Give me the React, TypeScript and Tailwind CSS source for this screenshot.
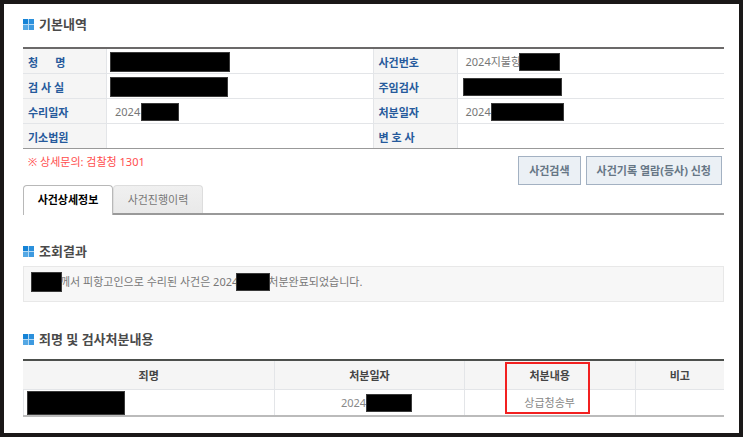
import type { ReactNode } from "react";
import clsx from "clsx";

const Mask = ({ className }: { className: string }) => (
  <span
    aria-hidden="true"
    className={clsx("relative block shrink-0 border border-[#3a3a3a] bg-black", className)}
  />
);

const SectionTitle = ({ children }: { children: ReactNode }) => (
  <h2 className="flex items-center gap-[5px] text-[13px] leading-4 font-bold text-[#4a4a4a]">
    <svg width="11" height="11" viewBox="0 0 11 11" aria-hidden="true">
      <rect width="11" height="11" fill="#b4d9f5" />
      <rect width="5" height="5" fill="#1583d6" />
      <rect x="6" width="5" height="5" fill="#2b90dc" />
      <rect y="6" width="5" height="5" fill="#55a8e4" />
      <rect x="6" y="6" width="5" height="5" fill="#3d9ae0" />
    </svg>
    {children}
  </h2>
);

const Label = ({ children }: { children: ReactNode }) => (
  <th
    scope="row"
    className="border-r border-[#e3e5e8] bg-[#f5f5f5] pt-1 pl-[5px] text-left font-bold whitespace-pre text-[#265a9c]"
  >
    {children}
  </th>
);

const Value = ({ children, className }: { children?: ReactNode; className?: string }) => (
  <td className={clsx("pt-px", className)}>
    <div className="flex items-center">{children}</div>
  </td>
);

const BasicInfo = () => (
  <table className="mt-[15px] w-full table-fixed border-separate border-spacing-0 border-t-2 border-b border-t-[#6b6969] border-b-[#999] [&_tr]:h-[25px] [&_tr:last-child]:h-6 [&_tr:not(:last-child)>*]:border-b [&_tr:not(:last-child)>*]:border-[#e3e5e8]">
    <colgroup>
      <col className="w-[84px]" />
      <col />
      <col className="w-[84px]" />
      <col />
    </colgroup>
    <tbody>
      <tr>
        <Label>{"청      명"}</Label>
        <Value className="border-r border-[#e3e5e8] pl-[3px]">
          <Mask className="h-5 w-[120px]" />
        </Value>
        <Label>사건번호</Label>
        <Value className="pl-2">
          2024지불항
          <Mask className="-ml-0.5 h-[18px] w-[41px]" />
        </Value>
      </tr>
      <tr>
        <Label>검 사 실</Label>
        <Value className="border-r border-[#e3e5e8] pl-[3px]">
          <Mask className="h-5 w-[118px]" />
        </Value>
        <Label>주임검사</Label>
        <Value className="pl-[5px]">
          <Mask className="h-[18px] w-[99px]" />
        </Value>
      </tr>
      <tr>
        <Label>수리일자</Label>
        <Value className="border-r border-[#e3e5e8] pl-2">
          2024
          <Mask className="ml-px h-[18px] w-[38px]" />
        </Value>
        <Label>처분일자</Label>
        <Value className="pl-2">
          2024
          <Mask className="h-[18px] w-[73px]" />
        </Value>
      </tr>
      <tr>
        <Label>기소법원</Label>
        <Value className="border-r border-[#e3e5e8]" />
        <Label>변 호 사</Label>
        <Value />
      </tr>
    </tbody>
  </table>
);

const ActionButton = ({ children }: { children: ReactNode }) => (
  <button
    type="button"
    className="h-[29px] border border-[#a3b1c2] bg-[#ebf0f5] px-2.5 font-bold text-[#667685]"
  >
    {children}
  </button>
);

const Tabs = () => (
  <div role="tablist" className="flex h-[30px]">
    <button
      type="button"
      role="tab"
      aria-selected="true"
      className="w-[90px] rounded-t border border-b-0 border-[#b8b8b8] bg-white pb-0.5 font-bold text-black"
    >
      사건상세정보
    </button>
    <div className="flex flex-1 border-b-2 border-[#999]">
      <button
        type="button"
        role="tab"
        aria-selected="false"
        className="w-[90px] rounded-t border border-b-0 border-[#ddd] bg-linear-to-b from-[#f0f0f0] to-[#e9e9e9] text-[#777]"
      >
        사건진행이력
      </button>
    </div>
  </div>
);

const Charges = () => (
  <table className="mt-3 w-full table-fixed border-separate border-spacing-0 border-t-2 border-b-2 border-t-[#4c4f4c] border-b-[#bbb] text-center">
    <thead className="bg-[#f5f5f5] text-[#444] [&_th]:h-[29px] [&_th]:border-b [&_th]:border-[#e3e5e8] [&_th]:pt-px [&_th]:font-bold [&_th:not(:last-child)]:border-r">
      <tr>
        <th scope="col" className="w-[36%]">죄명</th>
        <th scope="col" className="w-[27%]">처분일자</th>
        <th scope="col" className="relative w-[24.4%]">
          처분내용
          <span className="absolute top-px right-[45px] left-10 h-[52px] border-2 border-[#f22020]" />
        </th>
        <th scope="col">비고</th>
      </tr>
    </thead>
    <tbody className="text-[#888] [&_td]:h-[25px] [&_td]:border-[#e3e5e8] [&_td:not(:last-child)]:border-r">
      <tr>
        <td className="border-l pl-[3px]">
          <Mask className="h-6 w-[98px]" />
        </td>
        <td>
          <div className="flex items-center justify-center pl-3.5">
            2024
            <Mask className="h-[18px] w-[46px]" />
          </div>
        </td>
        <td>상급청송부</td>
        <td />
      </tr>
    </tbody>
  </table>
);

const App = () => {
  return (
    <main className="border-4 border-[#1a1818] bg-white pt-3 pr-[15px] pb-4 pl-[19px] font-['Noto_Sans','Noto_Sans_CJK_KR',sans-serif] text-[11px] leading-4 text-[#777]">
      <SectionTitle>기본내역</SectionTitle>
      <BasicInfo />

      <div className="flex items-start justify-between pt-[7px] pr-0.5 pl-[5px]">
        <p className="leading-3 text-[#ff4d4d]">※ 상세문의: 검찰청 1301</p>
        <div className="flex gap-[5px]">
          <ActionButton>사건검색</ActionButton>
          <ActionButton>사건기록 열람(등사) 신청</ActionButton>
        </div>
      </div>
      <Tabs />

      <section className="mt-7">
        <SectionTitle>조회결과</SectionTitle>
        <p className="mt-[7px] flex h-9 items-center border border-[#e8e8e8] bg-[#f7f7f7] pb-1 pl-[7px]">
          <Mask className="-mr-0.5 h-5 w-[31px]" />
          께서 피항고인으로 수리된 사건은 2024
          <Mask className="-mr-0.5 -ml-0.5 h-[18px] w-[34px]" />
          처분완료되었습니다.
        </p>
      </section>

      <section className="mt-[29px]">
        <SectionTitle>죄명 및 검사처분내용</SectionTitle>
        <Charges />
      </section>
    </main>
  );
};

export default App;
